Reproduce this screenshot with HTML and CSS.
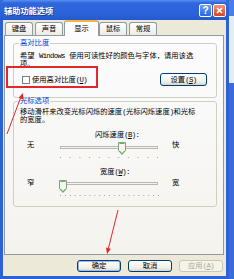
FILE: index.html
```html
<!DOCTYPE html>
<html lang="zh-CN">
<head>
<meta charset="utf-8">
<title>辅助功能选项</title>
<link rel="stylesheet" href="styles.css">
</head>
<body>
<div class="screen">
  <div class="window">
    <div class="titlebar">
      <span class="title">辅助功能选项</span>
      <div class="tbtns">
        <span class="tbtn help">?</span>
        <span class="tbtn close"><svg width="7" height="7" viewBox="0 0 7 7"><path d="M1 1L6 6M6 1L1 6" stroke="#fff" stroke-width="1.6"/></svg></span>
      </div>
    </div>
    <div class="body">
      <div class="tabs">
        <div class="tab">键盘</div>
        <div class="tab">声音</div>
        <div class="tab sel">显示</div>
        <div class="tab">鼠标</div>
        <div class="tab">常规</div>
      </div>
      <div class="panel">
        <fieldset class="group g1">
          <legend>高对比度</legend>
          <p class="desc">希望 <span class="en">Windows</span> 使用可读性好的颜色与字体，请用该选<br>项。</p>
          <div class="row">
            <label class="check"><span class="box"></span>使用高对比度<span class="key">(<u>U</u>)</span></label>
            <button class="btn set">设置<span class="key">(<u>S</u>)</span></button>
          </div>
        </fieldset>
        <fieldset class="group g2">
          <legend>光标选项</legend>
          <p class="desc">移动滑杆来改变光标闪烁的速度<span class="key">(</span>光标闪烁速度<span class="key">)</span>和光标<br>的宽度。</p>
          <div class="cap cap1">闪烁速度<span class="key">(<u>B</u>):</span></div>
          <div class="slrow s1">
            <span class="end">无</span>
            <svg class="slider" width="104" height="18" viewBox="0 0 104 18">
              <rect x="3.5" y="5.5" width="97" height="2" fill="#f4f3ee" stroke="#b9b8b0"/>
              <line x1="3" y1="16.5" x2="102" y2="16.5" stroke="#a3a39c" stroke-dasharray="1 8.7"/>
              <g transform="translate(61 1)">
                <path d="M0.5 0.5H7.5V8.5L4 12.5L0.5 8.5Z" fill="#f6f5f0" stroke="#8f988f"/>
                <path d="M1.5 1.5H6.5" stroke="#52c452"/>
                <path d="M1.3 8.8L4 11.7L6.7 8.8" fill="none" stroke="#3cb43c"/>
              </g>
            </svg>
            <span class="end right">快</span>
          </div>
          <div class="cap cap2">宽度<span class="key">(<u>W</u>):</span></div>
          <div class="slrow s2">
            <span class="end">窄</span>
            <svg class="slider" width="104" height="19" viewBox="0 0 104 19">
              <rect x="3.5" y="5.5" width="97" height="2" fill="#f4f3ee" stroke="#b9b8b0"/>
              <line x1="3" y1="18.5" x2="102" y2="18.5" stroke="#a3a39c" stroke-dasharray="1 3.9"/>
              <g transform="translate(2 3)">
                <path d="M0.5 0.5H7.5V8.5L4 12.5L0.5 8.5Z" fill="#f6f5f0" stroke="#8f988f"/>
                <path d="M1.5 1.5H6.5" stroke="#52c452"/>
                <path d="M1.3 8.8L4 11.7L6.7 8.8" fill="none" stroke="#3cb43c"/>
              </g>
            </svg>
            <span class="end right">宽</span>
          </div>
        </fieldset>
      </div>
      <div class="actions">
        <button class="btn def">确定</button>
        <button class="btn">取消</button>
        <button class="btn dis">应用<span class="key">(<u>A</u>)</span></button>
      </div>
    </div>
    <div class="redbox"></div>
    <svg class="arrows" width="229" height="279" viewBox="0 0 229 279">
      <line x1="7" y1="134" x2="20.5" y2="98" stroke="#e02828" stroke-width="1"/>
      <polygon points="23,93 23.2,99.5 18.6,97.8" fill="#e02828"/>
      <line x1="118" y1="210" x2="108.5" y2="248" stroke="#e02828" stroke-width="1"/>
      <polygon points="107,254 110.9,248.8 106,247.6" fill="#e02828"/>
    </svg>
  </div>
  <div class="strip"></div>
</div>
</body>
</html>
```

FILE: styles.css
```css
* { box-sizing: border-box; }
html, body { margin: 0; padding: 0; }
body {
  width: 234px;
  height: 279px;
  overflow: hidden;
  font-family: "Liberation Mono", "Noto Sans CJK SC", monospace;
  font-size: 7.3px;
  line-height: 8px;
  color: #000;
  background: #3566d8;
}
.en { letter-spacing: -0.7px; }
.key { letter-spacing: -0.6px; }
.screen { display: flex; width: 234px; height: 279px; }
.window {
  position: relative;
  width: 229px;
  height: 279px;
  display: flex;
  flex-direction: column;
  background: #2b62d6;
  border-radius: 5px 5px 0 0;
}
.titlebar {
  height: 20px;
  flex: none;
  display: flex;
  align-items: center;
  justify-content: space-between;
  padding: 0 3px 0 4px;
  background: linear-gradient(#5a8ef0 0, #2e67dd 3px, #2a61d8 15px, #2459cd 20px);
  border-radius: 5px 5px 0 0;
}
.title {
  color: #fff;
  font-family: "Noto Sans CJK SC", sans-serif;
  font-weight: bold;
  font-size: 8.2px;
  line-height: 10px;
  text-shadow: 1px 1px 0 #1a3f9c;
}
.tbtns { display: flex; gap: 1px; margin-top: 1px; }
.tbtn {
  width: 13px;
  height: 13px;
  border: 1px solid #fff;
  border-radius: 2px;
  display: flex;
  align-items: center;
  justify-content: center;
  color: #fff;
  font: bold 10px/1 "Liberation Sans", sans-serif;
}
.help { background: linear-gradient(#6c9df5, #2c66e2); }
.close { background: linear-gradient(#ee9676, #d8451d); }
.body {
  flex: 1;
  margin: 0 3px 3px 3px;
  background: #ece9d8;
  display: flex;
  flex-direction: column;
}
.tabs {
  height: 15px;
  flex: none;
  display: flex;
  align-items: flex-end;
  padding-left: 2px;
  position: relative;
  z-index: 1;
}
.tab {
  width: 28px;
  height: 13px;
  margin-right: 2px;
  border: 1px solid #919b9c;
  border-bottom: none;
  border-radius: 3px 3px 0 0;
  background: linear-gradient(#ffffff, #ecebe6);
  display: flex;
  align-items: center;
  justify-content: center;
}
.tab.sel {
  width: 35px;
  height: 16px;
  margin: 0 0 -1px -1px;
  border-top: 2px solid #f6b33e;
  background: #fcfcfe;
}
.panel {
  flex: none;
  margin-left: 1px;
  width: 220px;
  height: 220px;
  border: 1px solid #919b9c;
  background: linear-gradient(#fcfcfe, #f4f3ee);
}
.group {
  min-width: 0;
  width: 204px;
  border: 1px solid #d0d0bf;
  border-radius: 3px;
}
.group legend {
  padding: 0 1px;
  margin-left: -1px;
  color: #0046d5;
  line-height: 8px;
}
.g1 { margin: 3px 0 0 8px; padding: 5px 9px 11px 6px; }
.g2 { margin: -1px 0 0 8px; padding: 3px 9px 10px 6px; }
.desc { margin: 0; }
.row {
  margin-top: 5px;
  height: 13px;
  display: flex;
  align-items: center;
  justify-content: space-between;
}
.check { display: flex; align-items: center; }
.box {
  width: 8px;
  height: 8px;
  margin: 0 2px 0 2px;
  border: 1px solid #6f7f8f;
  background: #fff;
}
.btn {
  font: inherit;
  line-height: 8px;
  color: #000;
  padding: 0;
  border: 1px solid #003c74;
  border-radius: 3px;
  background: linear-gradient(#ffffff, #f0efe8 70%, #d8d4c8);
  display: flex;
  align-items: center;
  justify-content: center;
}
.set { width: 47px; height: 13px; }
.cap1 { margin: 7px 0 0 75px; }
.cap2 { margin: 9px 0 0 80px; }
.slrow { display: flex; align-items: flex-start; }
.s1 { margin-top: 2px; height: 18px; }
.s2 { margin-top: 1px; height: 19px; }
.s2 .end { margin-top: 2px; }
.end { width: 7px; margin-left: 7px; }
.slider { display: block; margin-left: 23px; }
.end.right { margin-left: 11px; }
.actions {
  flex: none;
  display: flex;
  justify-content: flex-end;
  gap: 7px;
  padding: 5px 3px 0 0;
}
.actions .btn { width: 44px; height: 12px; }
.btn.def { box-shadow: inset 0 0 0 1px #9bb8ef; }
.btn.dis { color: #aca899; border-color: #c9c7ba; background: #f5f4ea; }
.redbox {
  position: absolute;
  left: 6px;
  top: 66px;
  width: 92px;
  height: 22px;
  border: 2px solid #e0282a;
}
.arrows { position: absolute; left: 0; top: 0; pointer-events: none; }
.strip {
  width: 5px;
  height: 279px;
  background: linear-gradient(#4a7de6 0, #4a7de6 16px, #e6ecf5 16px, #e6ecf5 83px, #3a6bd9 83px);
}
```
